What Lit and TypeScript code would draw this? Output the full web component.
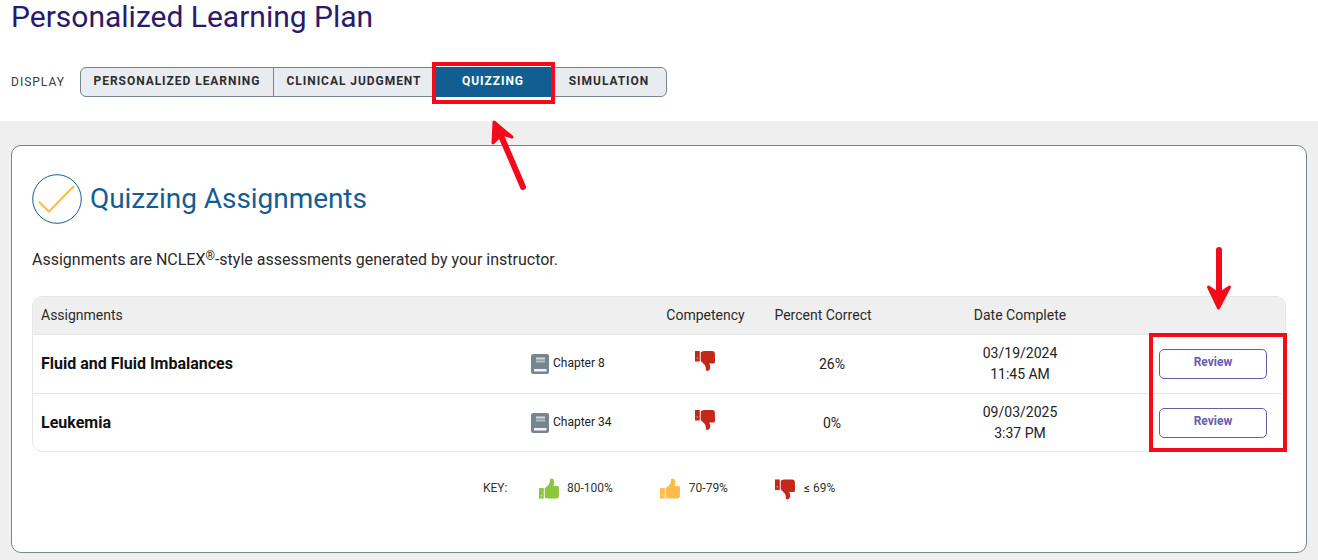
import { LitElement, html, css, svg } from "lit";
import { customElement } from "lit/decorators.js";

const thumb = (color: string, down: boolean) => html`<svg viewBox="0 0 22 22" aria-hidden="true">
  <g transform=${down ? "translate(0 22) scale(1 -1)" : ""} fill=${color}>
    ${svg`<path d="M0 10h5v11H0z"/>
    <rect x="1.800" y=${down ? "12.800" : "17.200"} width="1.400" height="1.400" fill="#fff" opacity=".5"/>
    <path d="M6 10.500 10 6.500C11 5.200 11.500 3 11.500 1.600 11.500.6 12.200 0 13 0 14.800 0 16 1.600 16 3.800 16 5.200 15.600 6.500 15 7.800H19C20.300 7.800 21 8.800 21 10L20.800 18.600C20.600 20.200 19.400 21 18 21H11C9 21 7.500 20.500 6 19.800Z"/>`}
  </g></svg>`;

const book = html`<svg class="book" viewBox="0 0 18 20" aria-hidden="true">
  <path fill="#76858f" d="M2.500 0H16a2 2 0 0 1 2 2v16a2 2 0 0 1-2 2H2.500A2.500 2.500 0 0 1 0 17.500V2.500A2.500 2.500 0 0 1 2.500 0z"/>
  <rect x="5" y="3.500" width="9" height="2" fill="#d5dadd"/>
  <rect x="5" y="6.500" width="9" height="2" fill="#b5bdc2"/>
  <rect x="3" y="15" width="12.500" height="2.500" fill="#f1f3f4"/>
</svg>`;

const rows = [
  { name: "Fluid and Fluid Imbalances", chapter: "Chapter 8", pct: "26%", date: "03/19/2024", time: "11:45 AM" },
  { name: "Leukemia", chapter: "Chapter 34", pct: "0%", date: "09/03/2025", time: "3:37 PM" },
];

const tabs = ["PERSONALIZED LEARNING", "CLINICAL JUDGMENT", "QUIZZING", "SIMULATION"];

@customElement("app-root")
export class AppRoot extends LitElement {
  static styles = css`
    :host { display: block; position: relative; width: 1318px; height: 560px; overflow: hidden; background: #efefef; font-family: Roboto, "Liberation Sans", sans-serif; color: #222; }
    .top { height: 121px; box-sizing: border-box; background: #fff; padding: 0 11px; }
    h1 { margin: 0; height: 67px; font-size: 30px; font-weight: 400; line-height: 33px; color: #2b1a6b; }
    .display { display: flex; align-items: center; height: 30px; }
    .display-label { width: 69px; font-size: 12px; letter-spacing: 1px; color: #3a3a3a; }
    .tabs { display: flex; height: 30px; box-sizing: border-box; border: 1px solid #76858f; border-radius: 6px; background: #e8ebf0; }
    .tab { display: flex; align-items: center; justify-content: center; box-sizing: border-box; height: 28px; padding-bottom: 2px; font-size: 12px; font-weight: 700; letter-spacing: 0.95px; color: #2e2e2e; }
    .t0 { width: 193px; border-right: 1px solid #76858f; }
    .t1 { width: 160px; }
    .t2 { width: 118px; background: #125e92; color: #fff; height: 30px; margin-top: -1px; }
    .t3 { width: 114px; }
    .card { margin: 24px 11px 0; height: 408px; box-sizing: border-box; background: #fff; border: 1px solid #76858f; border-radius: 10px; padding: 28px 20px 0; }
    .head { display: flex; align-items: center; gap: 8px; height: 50px; }
    .head svg { width: 50px; height: 50px; }
    h2 { margin: 0 0 2px; font-size: 28px; font-weight: 400; letter-spacing: -.05px; color: #125e92; }
    .intro { margin: 22px 0 0; height: 27px; font-size: 16px; line-height: 27px; color: #2b2b2b; }
    .intro sup { font-size: 12px; line-height: 0; vertical-align: 5px; }
    .table { margin-top: 23px; width: 1254px; box-sizing: border-box; border: 1px solid #e6e6e6; border-radius: 10px; overflow: hidden; }
    .row { display: grid; grid-template-columns: 498px 134px 80px 156px 238px 146px; align-items: center; border-top: 1px solid #e6e6e6; padding-bottom: 1px; box-sizing: border-box; height: 59px; }
    .row:last-child { height: 58px; padding-bottom: 0; }
    .hdr { height: 37px; border-top: 0; background: #efefef; font-size: 14px; color: #2b2b2b; }
    .hdr .first { padding-left: 8px; }
    .c { text-align: center; }
    .hdr .comp-h { padding-left: 1px; }
    .name { padding-left: 8px; font-size: 16px; font-weight: 700; color: #111; }
    .chapter { display: flex; align-items: center; gap: 4px; font-size: 12px; color: #1a1a2a; }
    .chapter span { padding-bottom: 2px; }
    .book { width: 18px; height: 20px; }
    .comp { display: flex; justify-content: center; padding-bottom: 6px; }
    .comp svg { width: 21px; height: 21px; }
    .pct { font-size: 14px; color: #222; padding-left: 18px; }
    .date { font-size: 14px; line-height: 21px; color: #222; }
    .btn-cell { display: flex; justify-content: center; padding-left: 2px; }
    button { width: 108px; height: 30px; box-sizing: border-box; background: #fff; border: 1px solid #6a5bad; border-radius: 5px; padding: 0 0 4px; font: 700 12px Roboto, sans-serif; color: #6a5bad; }
    .key { display: flex; align-items: center; height: 30px; margin-top: 22px; padding-left: 451px; font-size: 12px; color: #333; }
    .key svg { width: 21px; height: 22px; flex: none; }
    .key .l { width: 56px; padding-bottom: 2px; }
    .key .t { display: flex; align-items: center; gap: 7px; margin-right: 47px; }
    .key .t + .t { gap: 8px; }
    .key .t span { padding-bottom: 2px; }
    .over { position: absolute; left: 0; top: 0; width: 1318px; height: 560px; pointer-events: none; }
  `;

  render() {
    return html`
      <div class="top">
        <h1>Personalized Learning Plan</h1>
        <div class="display">
          <span class="display-label">DISPLAY</span>
          <div class="tabs">
            ${tabs.map((t, i) => html`<div class="tab t${i}">${t}</div>`)}
          </div>
        </div>
      </div>
      <div class="card">
        <div class="head">
          <svg viewBox="0 0 50 50" aria-hidden="true">
            <circle cx="25" cy="25" r="24.300" fill="none" stroke="#125e92" stroke-width="1"/>
            <path d="M7 27.700 17 37.500 42 12" fill="none" stroke="#fdbb4c" stroke-width="2"/>
          </svg>
          <h2>Quizzing Assignments</h2>
        </div>
        <p class="intro">Assignments are NCLEX<sup>®</sup>-style assessments generated by your instructor.</p>
        <div class="table">
          <div class="row hdr">
            <div class="first">Assignments</div><div></div>
            <div class="c comp-h">Competency</div><div class="c">Percent Correct</div><div class="c">Date Complete</div><div></div>
          </div>
          ${rows.map((r) => html`<div class="row">
            <div class="name">${r.name}</div>
            <div class="chapter">${book}<span>${r.chapter}</span></div>
            <div class="comp">${thumb("#c4281b", true)}</div>
            <div class="c pct">${r.pct}</div>
            <div class="c date">${r.date}<br />${r.time}</div>
            <div class="btn-cell"><button>Review</button></div>
          </div>`)}
        </div>
        <div class="key">
          <span class="l">KEY:</span>
          <span class="t">${thumb("#8cc63f", false)}<span>80-100%</span></span>
          <span class="t">${thumb("#fdbb4c", false)}<span>70-79%</span></span>
          <span class="t">${thumb("#c4281b", true)}<span>≤ 69%</span></span>
        </div>
      </div>
      <svg class="over" viewBox="0 0 1318 560" aria-hidden="true">
        <g fill="none" stroke="#f50a1c">
          <rect x="434" y="64" width="119" height="38" stroke-width="4"/>
          <rect x="1151" y="335" width="134" height="115" stroke-width="4"/>
          <g stroke-linecap="round" stroke-linejoin="round" fill="#f50a1c">
            <path stroke-width="6" d="M523 187 499 131"/>
            <path stroke-width="3" d="M494 122 493 143 502 134 512 137Z"/>
            <path stroke-width="6" d="M1219 250V296"/>
            <path stroke-width="3" d="M1208.500 287 1218.500 308 1229.500 287 1219 294Z"/>
          </g>
        </g>
      </svg>
    `;
  }
}
